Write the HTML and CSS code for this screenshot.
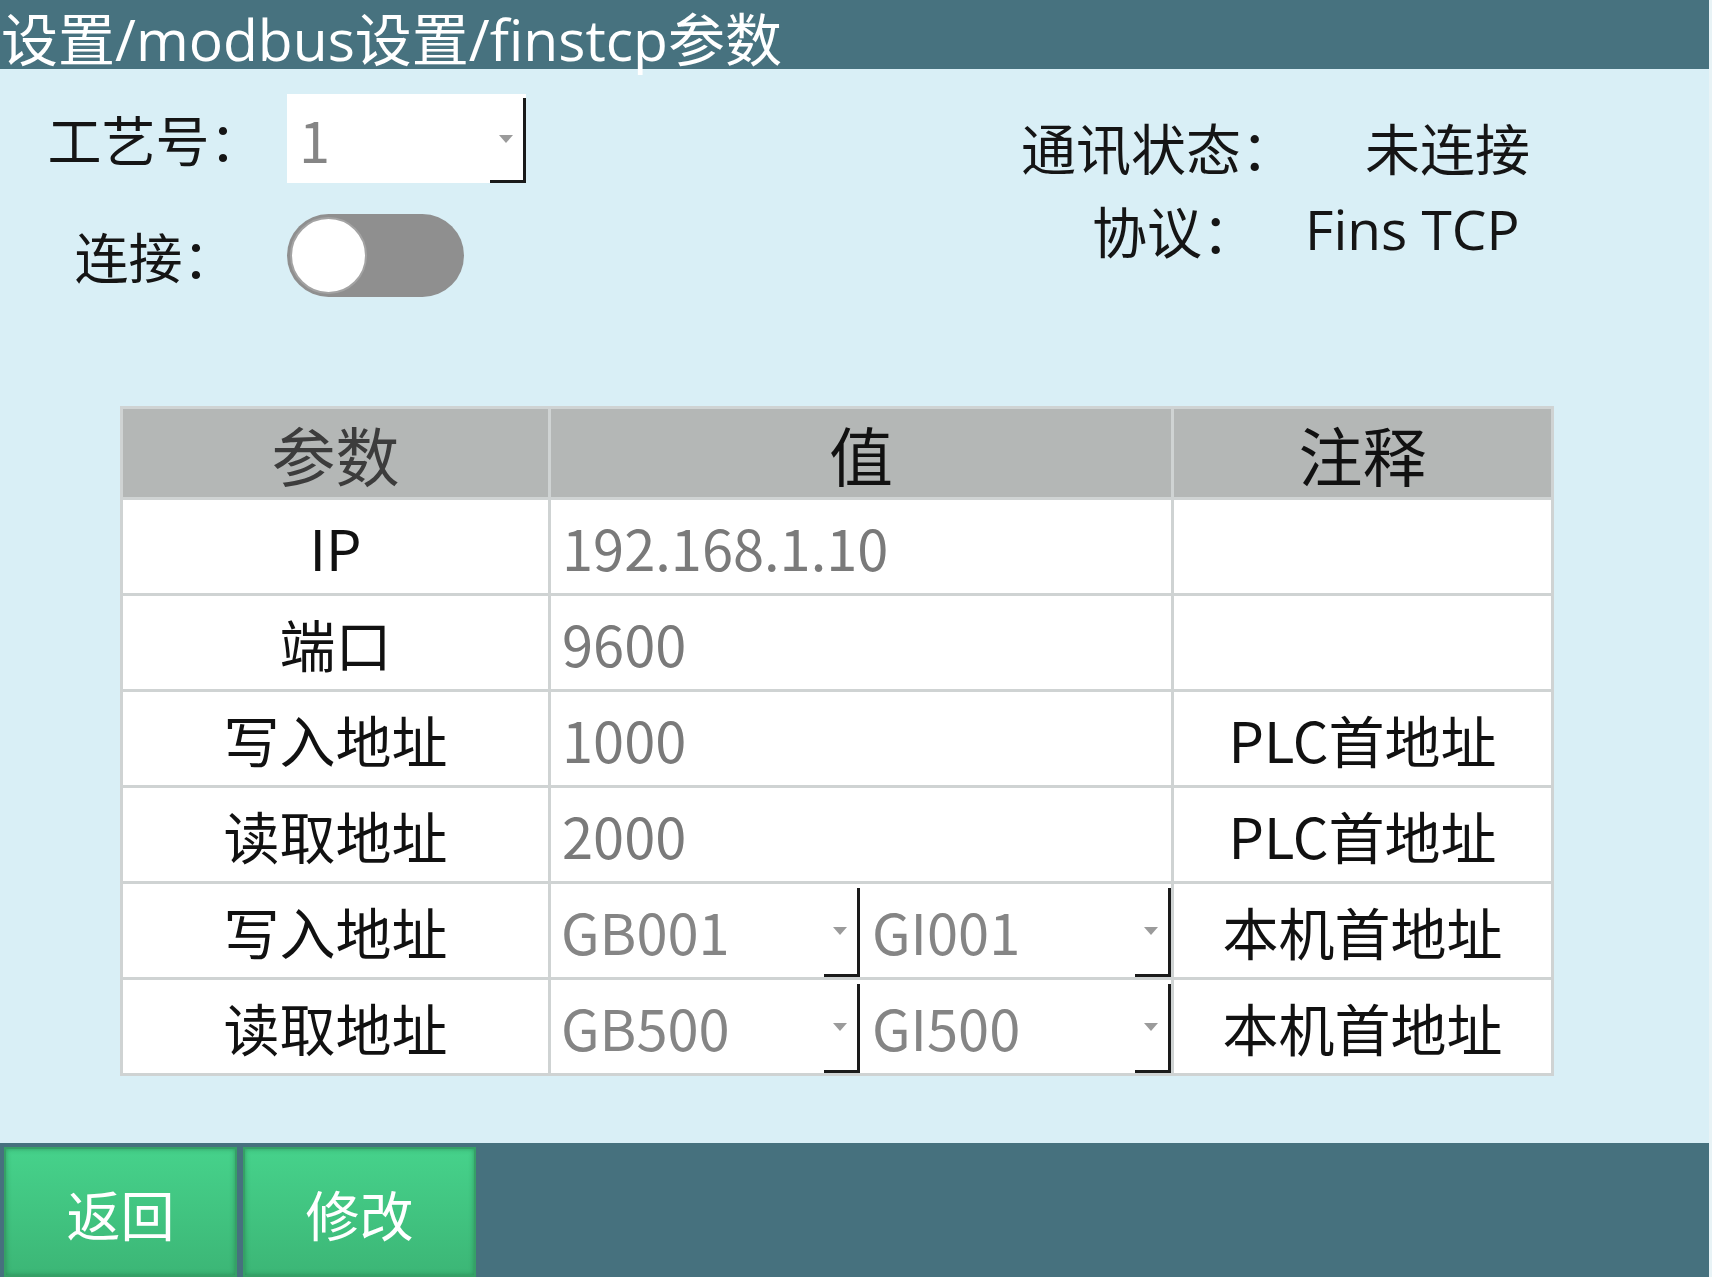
FILE: index.html
```html
<!DOCTYPE html>
<html lang="zh-CN">
<head>
<meta charset="utf-8">
<title>finstcp参数</title>
<link rel="stylesheet" href="styles.css">
</head>
<body>
<div class="app">
  <header class="titlebar"><h1 class="title">设置/modbus设置/finstcp参数</h1></header>
  <main class="content">
    <section class="top">
      <div class="form">
        <div class="form-row row-process">
          <span class="form-label">工艺号：</span>
          <div class="select select-process"><span class="select-value">1</span><span class="caret"></span></div>
        </div>
        <div class="form-row row-connect">
          <span class="form-label">连接：</span>
          <div class="toggle"><span class="knob"></span></div>
        </div>
      </div>
      <div class="status">
        <div class="status-row status-conn"><span class="status-label">通讯状态：</span><span class="status-value">未连接</span></div>
        <div class="status-row status-proto"><span class="status-label">协议：</span><span class="status-value latin">Fins TCP</span></div>
      </div>
    </section>

    <div class="params">
      <div class="cell head head-param">参数</div>
      <div class="cell head">值</div>
      <div class="cell head">注释</div>

      <div class="cell name">IP</div>
      <div class="cell value">192.168.1.10</div>
      <div class="cell note"></div>

      <div class="cell name">端口</div>
      <div class="cell value">9600</div>
      <div class="cell note"></div>

      <div class="cell name">写入地址</div>
      <div class="cell value">1000</div>
      <div class="cell note">PLC首地址</div>

      <div class="cell name">读取地址</div>
      <div class="cell value">2000</div>
      <div class="cell note">PLC首地址</div>

      <div class="cell name">写入地址</div>
      <div class="cell value split">
        <div class="select"><span class="select-value">GB001</span><span class="caret"></span></div>
        <div class="select"><span class="select-value">GI001</span><span class="caret"></span></div>
      </div>
      <div class="cell note">本机首地址</div>

      <div class="cell name">读取地址</div>
      <div class="cell value split">
        <div class="select"><span class="select-value">GB500</span><span class="caret"></span></div>
        <div class="select"><span class="select-value">GI500</span><span class="caret"></span></div>
      </div>
      <div class="cell note">本机首地址</div>
    </div>
  </main>
  <footer class="bottombar">
    <button class="btn">返回</button>
    <button class="btn">修改</button>
  </footer>
</div>
</body>
</html>
```

FILE: styles.css
```css
* { box-sizing: border-box; margin: 0; padding: 0; }

html, body {
  width: 1712px;
  height: 1277px;
  overflow: hidden;
}

body {
  background: #e8f3f6;
  font-family: "Noto Sans CJK SC", "Noto Sans", sans-serif;
  color: #111;
}

.app {
  width: 1709px;
  height: 1277px;
  display: flex;
  flex-direction: column;
  background: #d9eff6;
}

/* title bar */
.titlebar {
  height: 69px;
  flex: none;
  background: #47727f;
  display: flex;
  align-items: flex-end;
}

.title {
  font-family: "Open Sans", "Noto Sans CJK SC", sans-serif;
  font-weight: 400;
  font-size: 57px;
  line-height: 60px;
  color: #fff;
  padding-left: 1px;
  white-space: nowrap;
}

/* content */
.content {
  flex: 1;
  display: flex;
  flex-direction: column;
}

.top {
  height: 337px;
  display: flex;
  align-items: flex-start;
}

.form {
  width: 526px;
  padding: 25px 0 0 24px;
  display: flex;
  flex-direction: column;
  gap: 31px;
}

.form-row {
  display: flex;
  align-items: center;
}

.row-process { height: 89px; }
.row-connect { height: 83px; }

.form-label {
  width: 263px;
  text-align: center;
  font-size: 54px;
  line-height: 60px;
  color: #151515;
}

/* dropdown */
.select {
  position: relative;
  display: flex;
  align-items: center;
  background: #fff;
  height: 100%;
}

.select-process {
  width: 239px;
  height: 89px;
}

.select::before {
  content: "";
  position: absolute;
  right: 0;
  top: 4px;
  bottom: 0;
  width: 3px;
  background: #1a1a1a;
}

.select::after {
  content: "";
  position: absolute;
  right: 0;
  bottom: 0;
  width: 36px;
  height: 3px;
  background: #1a1a1a;
}

.select-value {
  color: #858585;
  font-size: 56px;
  line-height: 60px;
  padding-left: 12px;
}

.caret {
  margin-left: auto;
  margin-right: 13px;
  width: 0;
  height: 0;
  border-left: 7px solid transparent;
  border-right: 7px solid transparent;
  border-top: 8px solid #9b9b9b;
}

/* toggle */
.toggle {
  width: 177px;
  height: 83px;
  border-radius: 42px;
  background: #8f8f8f;
  display: flex;
  align-items: center;
  padding: 0 3px;
}

.knob {
  width: 77px;
  height: 77px;
  border-radius: 50%;
  background: #fff;
  border: 2px solid #a3a3a3;
}

/* status */
.status {
  margin-left: 495px;
  padding-top: 42px;
  display: flex;
  flex-direction: column;
  gap: 13px;
}

.status-row {
  display: flex;
  align-items: center;
  height: 70px;
  font-size: 55px;
  line-height: 70px;
  color: #151515;
}

.status-conn .status-label { width: 344px; }
.status-proto { padding-left: 71px; }
.status-proto .status-label { width: 213px; }

.latin {
  font-family: "Open Sans", "Noto Sans CJK SC", sans-serif;
}

/* parameter table */
.params {
  margin-left: 120px;
  width: 1434px;
  display: grid;
  grid-template-columns: 425px 620px 377px;
  grid-template-rows: 88px repeat(6, 93px);
  gap: 3px;
  padding: 3px;
  background: #cfd3d3;
}

.cell {
  background: #fff;
  display: flex;
  align-items: center;
  justify-content: center;
  font-size: 56px;
  line-height: 70px;
  color: #111;
}

.head {
  background: #b4b7b6;
  font-size: 64px;
  line-height: 80px;
}

.head-param { color: #3c3c3c; }

.value {
  justify-content: flex-start;
  padding-left: 11px;
  color: #7a7a7a;
}

.value.split {
  padding-left: 0;
  gap: 2px;
  align-items: stretch;
}

.split .select {
  flex: 1;
}

.split .select-value {
  padding-left: 10px;
}

/* bottom bar */
.bottombar {
  height: 134px;
  flex: none;
  background: #46717e;
  display: flex;
  gap: 6px;
  padding: 4px 0 0 4px;
}

.btn {
  width: 233px;
  height: 130px;
  border: 2px solid #36a066;
  background: linear-gradient(#46d28b, #3cb676);
  box-shadow: inset 0 0 5px rgba(20, 90, 50, 0.45);
  color: #fff;
  font-family: "Noto Sans CJK SC", sans-serif;
  font-size: 54px;
  line-height: 60px;
  padding-top: 4px;
}
```
